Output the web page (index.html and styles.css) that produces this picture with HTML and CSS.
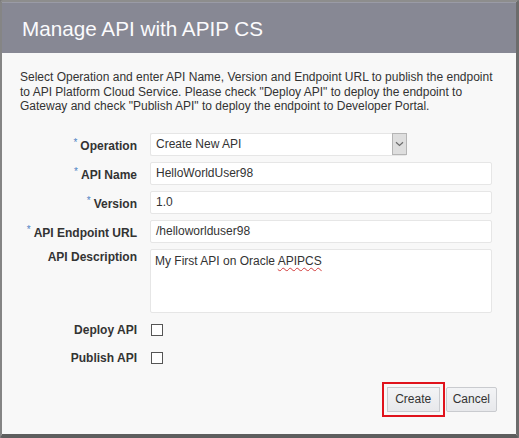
FILE: index.html
```html
<!DOCTYPE html>
<html lang="en">
<head>
<meta charset="utf-8">
<title>Manage API with APIP CS</title>
<link rel="stylesheet" href="styles.css">
</head>
<body>
<div class="dialog">
  <div class="header">
    <h1 class="title">Manage API with APIP CS</h1>
  </div>
  <div class="content">
    <p class="intro">Select Operation and enter API Name, Version and Endpoint URL to publish the endpoint to API Platform Cloud Service. Please check "Deploy API" to deploy the endpoint to Gateway and check "Publish API" to deploy the endpoint to Developer Portal.</p>
    <div class="form">
      <div class="label"><span class="req">*</span>Operation</div>
      <div class="select">
        <span class="select-text">Create New API</span>
        <span class="select-arrow">
          <svg width="9" height="6" viewBox="0 0 9 6"><path d="M1 1.2 L4.5 4.5 L8 1.2" fill="none" stroke="#6d6d6d" stroke-width="1.2"/></svg>
        </span>
      </div>

      <div class="label"><span class="req">*</span>API Name</div>
      <div class="input">HelloWorldUser98</div>

      <div class="label"><span class="req">*</span>Version</div>
      <div class="input">1.0</div>

      <div class="label"><span class="req">*</span>API Endpoint URL</div>
      <div class="input">/helloworlduser98</div>

      <div class="label label-top">API Description</div>
      <div class="textarea">My First API on Oracle <span class="spell">APIPCS</span></div>

      <div class="label label-check">Deploy API</div>
      <div class="check-cell"><span class="checkbox"></span></div>

      <div class="label label-check">Publish API</div>
      <div class="check-cell"><span class="checkbox"></span></div>
    </div>
    <div class="footer">
      <button class="btn btn-create" type="button">Create</button>
      <button class="btn" type="button">Cancel</button>
    </div>
  </div>
</div>
</body>
</html>
```

FILE: styles.css
```css
html, body {
  margin: 0;
  padding: 0;
}
body {
  width: 519px;
  height: 438px;
  background: #7a7a7a;
  font-family: "Liberation Sans", Arial, sans-serif;
  color: #333;
  overflow: hidden;
}
.dialog {
  box-sizing: border-box;
  width: 519px;
  height: 438px;
  border-style: solid;
  border-color: #8d8d8d #6c6c6c #5e5e5e #858585;
  border-width: 2px 3px 4px 2px;
  border-radius: 3px;
  background: #f8f8f8;
  display: flex;
  flex-direction: column;
}
.header {
  height: 50px;
  background: #878894;
  border-top: 1px solid #9a9ba6;
  display: flex;
  align-items: center;
  padding-left: 20px;
}
.title {
  margin: 0;
  font-weight: normal;
  font-size: 20.7px;
  color: #fbfbfd;
  line-height: 24px;
  padding-top: 1px;
}
.content {
  flex: 1;
  padding-top: 17px;
  background: #f8f8f8;
}
.intro {
  margin: 0 12px 0 18px;
  font-size: 12px;
  line-height: 14.5px;
  color: #333;
}
.form {
  margin-top: 19px;
  display: grid;
  grid-template-columns: 135px 342px;
  column-gap: 13px;
  row-gap: 6px;
}
.label {
  font-size: 12px;
  font-weight: bold;
  color: #333;
  text-align: right;
  align-self: center;
  line-height: 15px;
}
.label-top {
  align-self: start;
  padding-top: 1px;
}
.req {
  color: #4f84c4;
  font-size: 10px;
  vertical-align: 4px;
  margin-right: 3px;
  font-weight: normal;
}
.input,
.select,
.textarea {
  box-sizing: border-box;
  background: #fff;
  border: 1px solid #e6e6e6;
  border-radius: 2px;
  font-size: 12px;
  color: #333;
}
.input {
  height: 23px;
  line-height: 21px;
  padding-left: 5px;
}
.select {
  width: 257px;
  height: 23px;
  display: flex;
  align-items: center;
  justify-content: space-between;
  padding-left: 5px;
  border-right: none;
}
.select-text {
  line-height: 21px;
}
.select-arrow {
  box-sizing: border-box;
  width: 15px;
  height: 22px;
  background: #dedede;
  border: 1px solid #b5b5b5;
  display: flex;
  align-items: center;
  justify-content: center;
}
.textarea {
  height: 64px;
  padding: 4px 4px;
  line-height: 15px;
}
.spell {
  text-decoration: underline wavy #d23b3b;
  text-decoration-thickness: 1px;
  text-underline-offset: 2px;
}
.label-check {
  line-height: 22px;
}
.check-cell {
  height: 22px;
  display: flex;
  align-items: center;
  padding-left: 1px;
}
.checkbox {
  box-sizing: border-box;
  width: 12px;
  height: 12px;
  border: 1px solid #555;
  background: #fff;
}
.footer {
  margin-top: 18px;
  display: flex;
  justify-content: flex-end;
  gap: 6px;
  padding-right: 19px;
}
.btn {
  box-sizing: border-box;
  height: 25px;
  padding: 0 6px;
  font-family: "Liberation Sans", Arial, sans-serif;
  font-size: 12px;
  color: #333;
  background: linear-gradient(#f3f4f6, #e7e8eb);
  border: 1px solid #c9cbcf;
  border-radius: 2px;
}
.btn-create {
  width: 53px;
  border-radius: 0;
  outline: 2px solid #e0131c;
  outline-offset: 3px;
}
```
